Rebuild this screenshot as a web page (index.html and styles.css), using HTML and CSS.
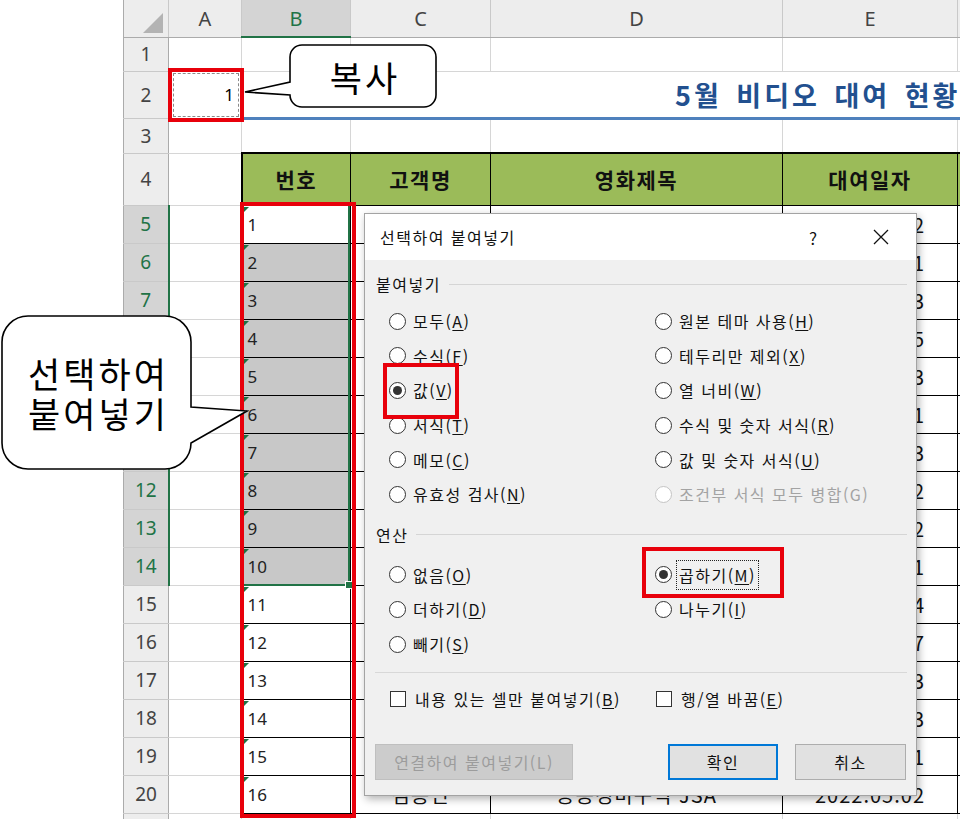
FILE: index.html
```html
<!DOCTYPE html>
<html lang="ko">
<head>
<meta charset="utf-8">
<title>선택하여 붙여넣기</title>
<link rel="stylesheet" href="styles.css">
</head>
<body>
<div class="sheet">
<table class="grid">
<colgroup>
<col class="w-rh"><col class="w-a"><col class="w-b"><col class="w-c"><col class="w-d"><col class="w-e"><col class="w-f">
</colgroup>
<tr class="r-hd"><th class="corner"><span class="tri"></span></th><th>A</th><th class="hsel">B</th><th>C</th><th>D</th><th>E</th><th>F</th></tr>
<tr class="r1"><td class="rh">1</td><td></td><td></td><td></td><td></td><td></td><td></td></tr>
<tr class="r2"><td class="rh">2</td><td class="a2">1</td><td class="title" colspan="5">5월 비디오 대여 현황</td></tr>
<tr class="r3"><td class="rh">3</td><td></td><td></td><td></td><td></td><td></td><td></td></tr>
<tr class="r4"><td class="rh">4</td><td></td><td class="h4 tl">번호</td><td class="h4">고객명</td><td class="h4">영화제목</td><td class="h4">대여일자</td><td class="h4"></td></tr>
<tr class="rr"><td class="rh sel">5</td><td></td><td class="b tl">1</td><td class="d">김민수</td><td class="d">기생충</td><td class="d">2022.05.02</td><td class="d"></td></tr>
<tr class="rr"><td class="rh sel">6</td><td></td><td class="b tl s">2</td><td class="d">이영희</td><td class="d">극한직업</td><td class="d">2022.05.01</td><td class="d"></td></tr>
<tr class="rr"><td class="rh sel">7</td><td></td><td class="b tl s">3</td><td class="d">박철수</td><td class="d">명량</td><td class="d">2022.05.03</td><td class="d"></td></tr>
<tr class="rr"><td class="rh sel">8</td><td></td><td class="b tl s">4</td><td class="d">최지은</td><td class="d">신과함께</td><td class="d">2022.05.05</td><td class="d"></td></tr>
<tr class="rr"><td class="rh sel">9</td><td></td><td class="b tl s">5</td><td class="d">정우성</td><td class="d">베테랑</td><td class="d">2022.05.03</td><td class="d"></td></tr>
<tr class="rr"><td class="rh sel">10</td><td></td><td class="b tl s">6</td><td class="d">강현우</td><td class="d">암살</td><td class="d">2022.05.01</td><td class="d"></td></tr>
<tr class="rr"><td class="rh sel">11</td><td></td><td class="b tl s">7</td><td class="d">조민지</td><td class="d">국제시장</td><td class="d">2022.05.03</td><td class="d"></td></tr>
<tr class="rr"><td class="rh sel">12</td><td></td><td class="b tl s">8</td><td class="d">윤서연</td><td class="d">부산행</td><td class="d">2022.05.02</td><td class="d"></td></tr>
<tr class="rr"><td class="rh sel">13</td><td></td><td class="b tl s">9</td><td class="d">장동건</td><td class="d">괴물</td><td class="d">2022.05.02</td><td class="d"></td></tr>
<tr class="rr"><td class="rh sel">14</td><td></td><td class="b tl s">10</td><td class="d">임수정</td><td class="d">도둑들</td><td class="d">2022.05.01</td><td class="d"></td></tr>
<tr class="rr"><td class="rh">15</td><td></td><td class="b tl">11</td><td class="d">한지민</td><td class="d">택시운전사</td><td class="d">2022.05.04</td><td class="d"></td></tr>
<tr class="rr"><td class="rh">16</td><td></td><td class="b tl">12</td><td class="d">오세훈</td><td class="d">해운대</td><td class="d">2022.05.07</td><td class="d"></td></tr>
<tr class="rr"><td class="rh">17</td><td></td><td class="b tl">13</td><td class="d">서지혜</td><td class="d">왕의 남자</td><td class="d">2022.05.03</td><td class="d"></td></tr>
<tr class="rr"><td class="rh">18</td><td></td><td class="b tl">14</td><td class="d">신동엽</td><td class="d">광해</td><td class="d">2022.05.03</td><td class="d"></td></tr>
<tr class="rr"><td class="rh">19</td><td></td><td class="b tl">15</td><td class="d">권나라</td><td class="d">실미도</td><td class="d">2022.05.01</td><td class="d"></td></tr>
<tr class="rr"><td class="rh">20</td><td></td><td class="b tl">16</td><td class="d">김용민</td><td class="d">공동경비구역 JSA</td><td class="d">2022.05.02</td><td class="d"></td></tr>
<tr class="rr"><td class="rh">21</td><td></td><td></td><td></td><td></td><td></td><td></td></tr>
</table>
</div>

<div class="selbox"></div>
<div class="fillhandle"></div>
<div class="redbox rb-a2"></div>
<div class="redbox rb-b"></div>

<svg class="shapes" width="960" height="819" viewBox="0 0 960 819">
  <path d="M302 45 H424 A12 12 0 0 1 436 57 V95 A12 12 0 0 1 424 107 H302 A12 12 0 0 1 290 95 L245 92 L290 82 V57 A12 12 0 0 1 302 45 Z" fill="#fff" stroke="#000" stroke-width="1.6"/>
  <path d="M28 316 H165 A26 26 0 0 1 191 342 V407 L247 411 L191 443 A26 26 0 0 1 165 469 H28 A26 26 0 0 1 2 443 V342 A26 26 0 0 1 28 316 Z" fill="#fff" stroke="#000" stroke-width="1.6"/>
</svg>
<div class="ctext c-copy">복사</div>
<div class="ctext c-paste">선택하여<br>붙여넣기</div>

<div class="dialog">
  <div class="titlebar">
    <span class="dtitle">선택하여 붙여넣기</span>
    <span class="help">?</span>
    <svg class="close" width="16" height="16" viewBox="0 0 16 16"><path d="M1 1 L15 15 M15 1 L1 15" stroke="#111" stroke-width="1.3"/></svg>
  </div>
  <div class="dbody">
    <div class="legend"><span>붙여넣기</span><i class="rule"></i></div>
    <div class="opts six">
      <div class="opt"><span class="radio"></span>모두(<u>A</u>)</div>
      <div class="opt"><span class="radio"></span>원본 테마 사용(<u>H</u>)</div>
      <div class="opt"><span class="radio"></span>수식(<u>F</u>)</div>
      <div class="opt"><span class="radio"></span>테두리만 제외(<u>X</u>)</div>
      <div class="opt"><span class="radio on"></span>값(<u>V</u>)</div>
      <div class="opt"><span class="radio"></span>열 너비(<u>W</u>)</div>
      <div class="opt"><span class="radio"></span>서식(<u>T</u>)</div>
      <div class="opt"><span class="radio"></span>수식 및 숫자 서식(<u>R</u>)</div>
      <div class="opt"><span class="radio"></span>메모(<u>C</u>)</div>
      <div class="opt"><span class="radio"></span>값 및 숫자 서식(<u>U</u>)</div>
      <div class="opt"><span class="radio"></span>유효성 검사(<u>N</u>)</div>
      <div class="opt off"><span class="radio"></span>조건부 서식 모두 병합(G)</div>
    </div>
    <div class="legend op"><span>연산</span><i class="rule"></i></div>
    <div class="opts three">
      <div class="opt"><span class="radio"></span>없음(<u>O</u>)</div>
      <div class="opt"><span class="radio on"></span><span class="focus">곱하기(<u>M</u>)</span></div>
      <div class="opt"><span class="radio"></span>더하기(<u>D</u>)</div>
      <div class="opt"><span class="radio"></span>나누기(<u>I</u>)</div>
      <div class="opt"><span class="radio"></span>빼기(<u>S</u>)</div>
    </div>
    <div class="sep"></div>
    <div class="opts checks">
      <div class="opt"><span class="check"></span>내용 있는 셀만 붙여넣기(<u>B</u>)</div>
      <div class="opt"><span class="check"></span>행/열 바꿈(<u>E</u>)</div>
    </div>
    <div class="buttons">
      <span class="btn disabled">연결하여 붙여넣기(L)</span>
      <span class="btn ok">확인</span>
      <span class="btn cancel">취소</span>
    </div>
  </div>
  <div class="redbox rv"></div>
  <div class="redbox rm"></div>
</div>
</body>
</html>
```
FILE: styles.css
```css
html, body {
  margin: 0;
  padding: 0;
}
body {
  width: 960px;
  height: 819px;
  overflow: hidden;
  position: relative;
  background: #fff;
  font-family: "Noto Sans", "Noto Sans CJK KR", sans-serif;
  color: #000;
}

.sheet {
  padding-left: 123px;
}

.grid {
  border-collapse: collapse;
  table-layout: fixed;
  width: 1034px;
}
.w-rh { width: 45px; }
.w-a { width: 73px; }
.w-b { width: 109px; }
.w-c { width: 140px; }
.w-d { width: 292px; }
.w-e { width: 175px; }
.w-f { width: 200px; }

.grid td, .grid th {
  padding: 0;
  border: 1px solid #D6D6D6;
  white-space: nowrap;
  overflow: hidden;
}

.r-hd { height: 37px; }
.r1 { height: 34px; }
.r2 { height: 47px; }
.r3 { height: 35px; }
.r4 { height: 52px; }
.rr { height: 38px; }

.grid th {
  background: #EDEDED;
  color: #444;
  font-weight: normal;
  font-size: 20px;
  border-color: #C9C9C9;
  border-bottom: 1px solid #ABABAB;
  border-top: none;
}
.grid th.hsel {
  background: #D4D4D4;
  color: #217346;
  border-bottom: 2px solid #217346;
}
.grid th.corner {
  position: relative;
  border-left: 1px solid #ABABAB;
}
.tri {
  position: absolute;
  right: 5px;
  bottom: 4px;
  width: 0;
  height: 0;
  border-left: 20px solid transparent;
  border-bottom: 20px solid #B3B3B3;
}

.grid td.rh {
  background: #EDEDED;
  color: #444;
  font-size: 19px;
  text-align: center;
  border-color: #C9C9C9;
  border-left: 1px solid #ABABAB;
  border-right: 1px solid #ABABAB;
}
.grid td.rh.sel {
  background: #D4D4D4;
  color: #217346;
  border-right: 2px solid #217346;
}

.grid td.a2 {
  text-align: right;
  padding-right: 7px;
  font-size: 17px;
}

.grid td.title {
  padding-left: 433px;
  font-family: "Noto Sans CJK KR", sans-serif;
  font-weight: bold;
  font-size: 27px;
  letter-spacing: 3px;
  word-spacing: 4px;
  color: #22508F;
  border-bottom: 3px solid #4F81BD;
}

.grid td.h4 {
  background: #9BBB59;
  border: 1px solid #000;
  border-top: 2px solid #000;
  text-align: center;
  font-family: "Noto Sans CJK KR", sans-serif;
  font-weight: bold;
  font-size: 21px;
  letter-spacing: 1.5px;
  color: #111;
}
.grid td.tl {
  border-left: 2px solid #000;
}

.grid td.b {
  position: relative;
  border: 1px solid #000;
  border-left: 2px solid #000;
  font-size: 17px;
  padding-left: 5px;
  color: #222;
}
.grid td.b::before {
  content: "";
  position: absolute;
  left: 1px;
  top: 1px;
  border-top: 5px solid #1E7145;
  border-right: 5px solid transparent;
}
.grid td.b.s {
  background: #C8C8C8;
}
.grid td.d {
  border: 1px solid #000;
  text-align: center;
  font-family: "Noto Sans CJK KR", sans-serif;
  font-size: 20px;
  letter-spacing: 1px;
  color: #111;
}

/* overlays */
.selbox {
  position: absolute;
  left: 240px;
  top: 204px;
  width: 110px;
  height: 382px;
  box-sizing: border-box;
  border: 2px solid #217346;
}
.fillhandle {
  position: absolute;
  left: 345px;
  top: 581px;
  width: 6px;
  height: 6px;
  background: #217346;
  border: 1px solid #fff;
}
.redbox {
  position: absolute;
  box-sizing: border-box;
  border: 4px solid #E8000B;
}
.rb-a2 {
  left: 168px;
  top: 68px;
  width: 76px;
  height: 54px;
}
.rb-a2::after {
  content: "";
  position: absolute;
  inset: 1px;
  border: 1px dashed #8a8a8a;
}
.rb-b {
  left: 240px;
  top: 202px;
  width: 116px;
  height: 616px;
}

.shapes {
  position: absolute;
  left: 0;
  top: 0;
}
.ctext {
  position: absolute;
  font-family: "Noto Sans CJK KR", sans-serif;
  color: #000;
  text-align: center;
  display: flex;
  align-items: center;
  justify-content: center;
}
.c-copy {
  left: 292px;
  top: 45px;
  width: 146px;
  height: 62px;
  font-size: 35px;
  letter-spacing: 3px;
  line-height: 1;
}
.c-paste {
  left: 4px;
  top: 316px;
  width: 189px;
  height: 153px;
  font-size: 35px;
  letter-spacing: 3px;
  line-height: 40px;
}

/* dialog */
.dialog {
  position: absolute;
  left: 364px;
  top: 213px;
  width: 553px;
  height: 583px;
  box-sizing: border-box;
  border: 1px solid #A3A3A3;
  background: #F0F0F0;
  box-shadow: 2px 3px 8px rgba(0, 0, 0, 0.3);
  font-family: "Noto Sans CJK KR", sans-serif;
  font-size: 16px;
  letter-spacing: 1.5px;
  color: #111;
}
.titlebar {
  height: 46px;
  background: #fff;
  display: flex;
  align-items: center;
  padding-left: 15px;
  position: relative;
}
.dtitle {
  flex: 1;
}
.help {
  width: 64px;
  font-size: 17px;
}
.close {
  margin-right: 27px;
}
.dbody {
  padding: 0 9px 0 10px;
}
.legend {
  display: flex;
  align-items: center;
  height: 24px;
  margin-top: 12px;
  padding-left: 1px;
}
.legend.op {
  margin-top: 11px;
}
.rule {
  flex: 1;
  height: 1px;
  background: #D5D5D5;
  margin-left: 8px;
}
.opts {
  display: grid;
  grid-template-columns: 266px 1fr;
  padding-left: 15px;
}
.opts.six {
  margin-top: 8px;
  grid-template-rows: repeat(6, 34.6px);
}
.opts.three {
  margin-top: 11px;
  grid-template-rows: repeat(3, 34.6px);
}
.opts.checks {
  margin-top: 14px;
  grid-template-rows: 24px;
}
.opt {
  display: flex;
  align-items: center;
  white-space: nowrap;
}
.opt.off {
  color: #A3A3A3;
}
.opt u {
  text-underline-offset: 2px;
}
.radio {
  width: 17px;
  height: 17px;
  box-sizing: border-box;
  border: 1px solid #333;
  border-radius: 50%;
  background: #fff;
  margin-right: 7px;
  margin-left: -1px;
  display: flex;
  align-items: center;
  justify-content: center;
  flex: none;
}
.radio.on::after {
  content: "";
  width: 9px;
  height: 9px;
  border-radius: 50%;
  background: #333;
}
.opt.off .radio {
  border-color: #C4C4C4;
}
.check {
  width: 16px;
  height: 16px;
  box-sizing: border-box;
  border: 1px solid #333;
  background: #fff;
  margin-right: 9px;
  flex: none;
}
.focus {
  outline: 1px dotted #222;
  outline-offset: 2px;
}
.sep {
  height: 1px;
  background: #D8D8D8;
  margin-top: 11px;
}
.buttons {
  display: flex;
  margin-top: 33px;
  height: 36px;
}
.btn {
  display: flex;
  align-items: center;
  justify-content: center;
  box-sizing: border-box;
  height: 36px;
  background: #E1E1E1;
  border: 1px solid #ADADAD;
}
.btn.disabled {
  width: 198px;
  background: #CCCCCC;
  border-color: #BFBFBF;
  color: #9C9C9C;
}
.btn.ok {
  width: 110px;
  margin-left: auto;
  border: 2px solid #0078D7;
}
.btn.cancel {
  width: 111px;
  margin-left: 17px;
  margin-right: 1px;
}
.rv {
  left: 18px;
  top: 149px;
  width: 76px;
  height: 56px;
}
.rm {
  left: 277px;
  top: 333px;
  width: 142px;
  height: 51px;
}
```
